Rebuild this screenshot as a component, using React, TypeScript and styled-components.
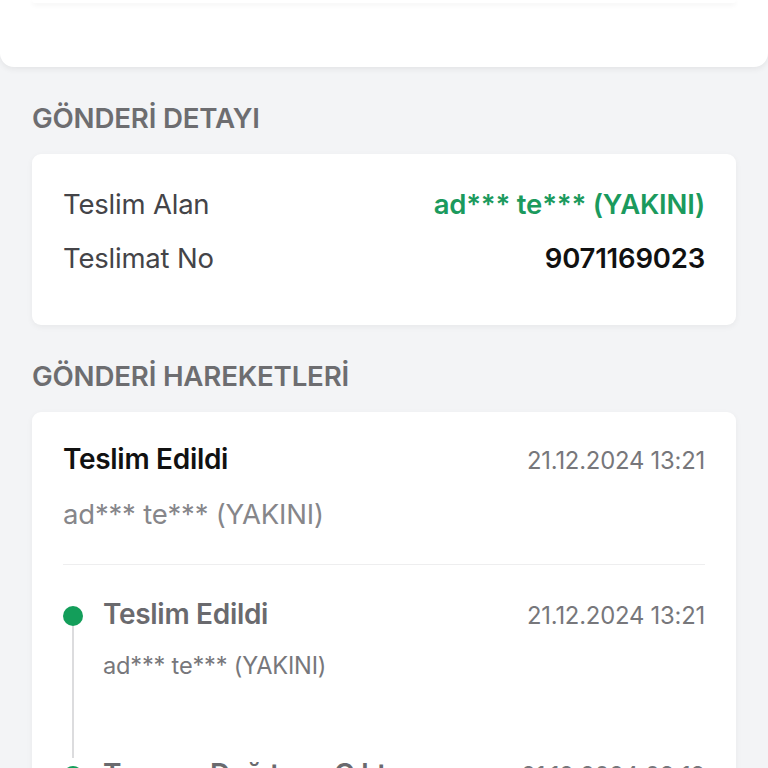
import React from "react";
import styled, { createGlobalStyle } from "styled-components";

const GlobalStyle = createGlobalStyle`
  html, body {
    margin: 0;
    padding: 0;
    background: #f3f4f6;
    font-family: Inter, "Noto Sans", "Liberation Sans", sans-serif;
    -webkit-font-smoothing: antialiased;
  }
  body {
    height: 768px;
    overflow: hidden;
  }
`;

const Page = styled.div`
  width: 768px;
  min-height: 768px;
  display: flex;
  flex-direction: column;
`;

const TopCard = styled.div`
  background: #ffffff;
  height: 67px;
  border-radius: 0 0 14px 14px;
  box-shadow: 0 2px 6px rgba(0, 0, 0, 0.07);
  padding: 0 32px;
  box-sizing: border-box;
`;

const TopInner = styled.div`
  height: 3px;
  background: #ffffff;
  box-shadow: 0 2px 5px rgba(0, 0, 0, 0.06);
  border-radius: 0 0 6px 6px;
`;

const Section = styled.section`
  padding: 0 32px;
  display: flex;
  flex-direction: column;
`;

const SectionTitle = styled.h2`
  margin: 35px 0 20px;
  font-size: 27.7px;
  line-height: 32px;
  font-weight: 600;
  color: #6d6d70;
  letter-spacing: -0.2px;
`;

const Card = styled.div<{ $pad?: string }>`
  background: #ffffff;
  border-radius: 9px;
  box-shadow: 0 2px 6px rgba(0, 0, 0, 0.05);
  padding: ${(p) => p.$pad || "23px 31px 40px"};
`;

const InfoRow = styled.div`
  height: 54px;
  display: flex;
  align-items: center;
  justify-content: space-between;
`;

const InfoLabel = styled.span`
  font-size: 27.5px;
  color: #444448;
  letter-spacing: -0.2px;
`;

const InfoValue = styled.span<{ $green?: boolean }>`
  font-size: 27.5px;
  font-weight: 600;
  color: ${(p) => (p.$green ? "#1b9a5d" : "#111111")};
  letter-spacing: -0.2px;
`;

const HeadRow = styled.div`
  display: flex;
  justify-content: space-between;
  align-items: baseline;
`;

const HeadTitle = styled.span<{ $muted?: boolean }>`
  font-size: 28px;
  line-height: 32px;
  font-weight: 600;
  color: ${(p) => (p.$muted ? "#6a6a6e" : "#111111")};
  letter-spacing: -0.3px;
`;

const DateText = styled.span`
  font-size: 23.8px;
  line-height: 32px;
  color: #77777b;
  letter-spacing: -0.2px;
`;

const Receiver = styled.div`
  margin-top: 22px;
  font-size: 27.5px;
  line-height: 30px;
  color: #86868a;
  letter-spacing: -0.2px;
`;

const Divider = styled.hr`
  border: none;
  border-top: 1.5px solid #eeeeef;
  margin: 35px 0 33px;
`;

const TimelineItem = styled.div`
  display: flex;
  gap: 20px;
  min-height: 160px;
`;

const Rail = styled.div`
  width: 20px;
  display: flex;
  flex-direction: column;
  align-items: center;
  flex-shrink: 0;
`;

const Dot = styled.span`
  width: 20px;
  height: 20px;
  border-radius: 50%;
  background: #139e5a;
  margin-top: 8px;
  flex-shrink: 0;
`;

const Line = styled.span`
  width: 2px;
  flex: 1;
  background: #dcdcde;
`;

const ItemBody = styled.div`
  flex: 1;
  display: flex;
  flex-direction: column;
`;

const ItemSub = styled.div`
  margin-top: 20px;
  font-size: 23.6px;
  line-height: 28px;
  color: #77777b;
  letter-spacing: -0.2px;
`;

type Move = { title: string; date: string; sub?: string };

const moves: Move[] = [
  { title: "Teslim Edildi", date: "21.12.2024 13:21", sub: "ad*** te*** (YAKINI)" },
  { title: "Taşıyıcı Dağıtıma Çıktı", date: "21.12.2024 09:19" },
];

export default function App() {
  return (
    <Page>
      <GlobalStyle />
      <TopCard>
        <TopInner />
      </TopCard>

      <Section>
        <SectionTitle>GÖNDERİ DETAYI</SectionTitle>
        <Card>
          <InfoRow>
            <InfoLabel>Teslim Alan</InfoLabel>
            <InfoValue $green>ad*** te*** (YAKINI)</InfoValue>
          </InfoRow>
          <InfoRow>
            <InfoLabel>Teslimat No</InfoLabel>
            <InfoValue>9071169023</InfoValue>
          </InfoRow>
        </Card>

        <SectionTitle>GÖNDERİ HAREKETLERİ</SectionTitle>
        <Card $pad="31px 31px 40px">
          <HeadRow>
            <HeadTitle>Teslim Edildi</HeadTitle>
            <DateText>21.12.2024 13:21</DateText>
          </HeadRow>
          <Receiver>ad*** te*** (YAKINI)</Receiver>
          <Divider />
          {moves.map((m) => (
            <TimelineItem key={m.title + m.date}>
              <Rail>
                <Dot />
                <Line />
              </Rail>
              <ItemBody>
                <HeadRow>
                  <HeadTitle $muted>{m.title}</HeadTitle>
                  <DateText>{m.date}</DateText>
                </HeadRow>
                {m.sub && <ItemSub>{m.sub}</ItemSub>}
              </ItemBody>
            </TimelineItem>
          ))}
        </Card>
      </Section>
    </Page>
  );
}
